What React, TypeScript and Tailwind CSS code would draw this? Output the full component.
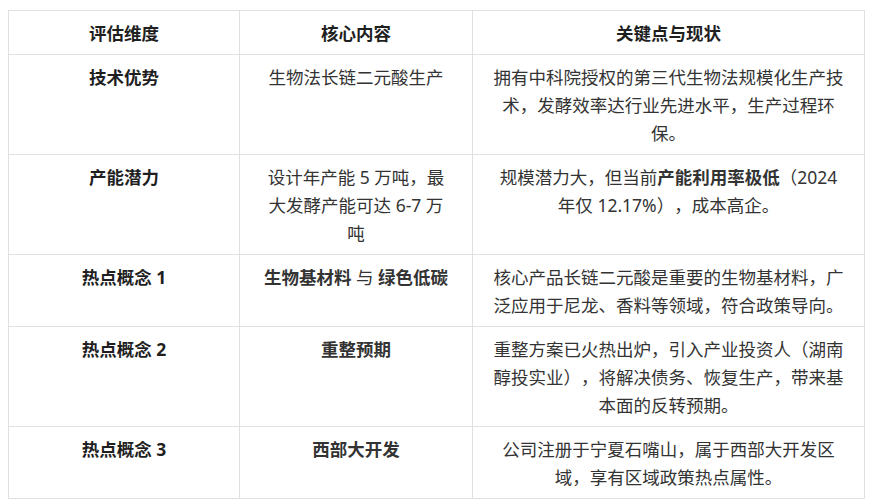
import type { ReactNode } from 'react'

type Row = {
  dim: string
  core: ReactNode
  note: ReactNode
}

const rows: Row[] = [
  {
    dim: '技术优势',
    core: '生物法长链二元酸生产',
    note: '拥有中科院授权的第三代生物法规模化生产技术，发酵效率达行业先进水平，生产过程环保。',
  },
  {
    dim: '产能潜力',
    core: '设计年产能 5 万吨，最大发酵产能可达 6-7 万吨',
    note: (
      <>
        规模潜力大，但当前<strong className="font-bold">产能利用率极低</strong>（2024 年仅 12.17%），成本高企。
      </>
    ),
  },
  {
    dim: '热点概念 1',
    core: (
      <>
        <strong className="font-bold">生物基材料</strong> 与 <strong className="font-bold">绿色低碳</strong>
      </>
    ),
    note: '核心产品长链二元酸是重要的生物基材料，广泛应用于尼龙、香料等领域，符合政策导向。',
  },
  {
    dim: '热点概念 2',
    core: <strong className="font-bold">重整预期</strong>,
    note: '重整方案已火热出炉，引入产业投资人（湖南醇投实业），将解决债务、恢复生产，带来基本面的反转预期。',
  },
  {
    dim: '热点概念 3',
    core: <strong className="font-bold">西部大开发</strong>,
    note: '公司注册于宁夏石嘴山，属于西部大开发区域，享有区域政策热点属性。',
  },
]

const cell = 'border border-[#e0e0e0] px-4 py-[7.5px] text-center align-top'
const mid = 'border border-[#e0e0e0] px-[22px] py-[7.5px] text-center align-top'

export default function App() {
  return (
    <div className="min-h-screen bg-white px-2 pt-[10px] font-['Noto_Sans','Noto_Sans_CJK_SC',sans-serif] text-[17.5px] leading-7 text-[#333] [text-spacing-trim:space-all]">
      <table className="w-full table-fixed border-collapse">
        <colgroup>
          <col className="w-[231px]" />
          <col className="w-[233px]" />
          <col />
        </colgroup>
        <thead>
          <tr>
            <th className={`${cell} font-bold text-[#1f1f1f]`}>评估维度</th>
            <th className={`${mid} font-bold text-[#1f1f1f]`}>核心内容</th>
            <th className={`${cell} font-bold text-[#1f1f1f]`}>关键点与现状</th>
          </tr>
        </thead>
        <tbody>
          {rows.map((r) => (
            <tr key={r.dim}>
              <td className={`${cell} font-bold text-[#1f1f1f]`}>{r.dim}</td>
              <td className={mid}>{r.core}</td>
              <td className={cell}>{r.note}</td>
            </tr>
          ))}
        </tbody>
      </table>
    </div>
  )
}
